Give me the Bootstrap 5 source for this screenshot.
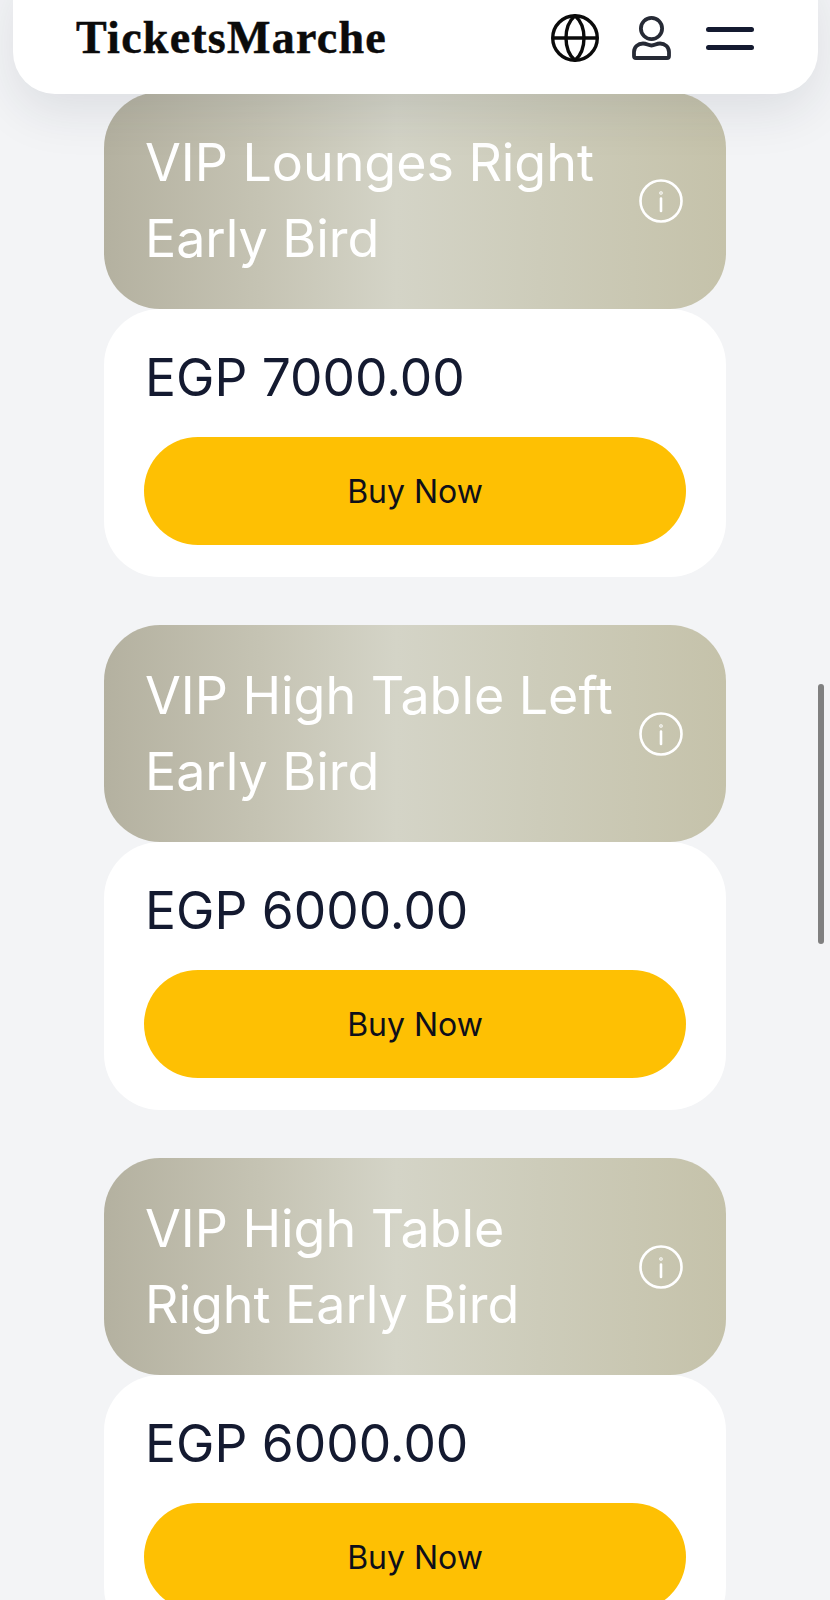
<!DOCTYPE html>
<html lang="en">
<head>
  <meta charset="UTF-8"/>
  <meta name="viewport" content="width=device-width, initial-scale=1.0"/>
  <title>TicketsMarche</title>
  <link href="https://cdn.jsdelivr.net/npm/bootstrap@5.3.0/dist/css/bootstrap.min.css" rel="stylesheet"/>
  <style>
    html, body { height: 1600px; overflow: hidden; }
    body { background: #f3f4f6; font-family: Inter, "Liberation Sans", sans-serif; position: relative; }
    .top-bar { position: absolute; top: -40px; left: 13px; width: 805px; height: 134px; background: #fff; border-radius: 42px; padding: 22px 64px 0 63px; box-shadow: 0 18px 50px rgba(30,35,60,.1); z-index: 5; }
    .brand-name { font-family: "Liberation Serif", serif; font-weight: 700; font-size: 46px; line-height: 1; color: #0b0b0b; letter-spacing: 1.25px; -webkit-text-stroke: .5px #0b0b0b; padding: 0; margin: 0; }
    .top-icons { gap: 33px; }
    .top-icons .menu-icon { margin-left: 2px; }
    .ticket-list { padding: 92px 104px 0; gap: 48px; }
    .ticket-head { height: 217px; border-radius: 56px; padding: 0 43px 0 41px; color: #fff; background: linear-gradient(90deg, #b4b1a0 0%, #c5c3b3 25%, #d4d4c7 47%, #cdccba 70%, #c5c2aa 100%); }
    .ticket-title { font-size: 52px; font-weight: 400; letter-spacing: -.05px; line-height: 76px; margin: 0; width: 480px; }
    .ticket-body { height: 268px; background: #fff; border-radius: 56px; padding: 30px 40px 0; }
    .ticket-price { font-size: 51.5px; font-weight: 400; line-height: 76px; color: #141a30; margin: 0 0 22px 1px; }
    .buy-btn { height: 108px; border-radius: 54px; background: #fec003; border: 0; color: #0e0f1a; font-size: 32px; width: 100%; padding-top: 8px; --bs-btn-hover-bg: #fec003; }
    .fake-scroll { position: absolute; left: 818px; top: 684px; width: 6px; height: 260px; background: #808080; border-radius: 3px; z-index: 6; }
  </style>
</head>
<body>
  <!-- Navbar -->
  <nav class="navbar top-bar d-flex justify-content-between align-items-center flex-nowrap">
    <a class="navbar-brand brand-name" href="#">TicketsMarche</a>
    <div class="d-flex align-items-center top-icons">
      <svg width="48" height="48" viewBox="0 0 48 48" fill="none" stroke="#0b0b0b" stroke-width="3.4">
        <circle cx="24" cy="24" r="22.3"/>
        <path d="M1.7 24H46.3"/>
        <path d="M24 1.7C12 12 12 36 24 46.3C36 36 36 12 24 1.7Z"/>
      </svg>
      <svg width="39" height="44" viewBox="0 0 39 44" fill="none" stroke="#262a35" stroke-width="3.8">
        <circle cx="19.5" cy="12.5" r="10.6"/>
        <path d="M4 42H35C36.4 42 37 41 37 40V36C37 31 33 27.5 28 27.5C24 27.5 23 29.5 19.5 29.5C16 29.5 15 27.5 11 27.5C6 27.5 2 31 2 36V40C2 41 2.6 42 4 42Z" stroke-linejoin="round"/>
      </svg>
      <svg class="menu-icon" width="48" height="23" viewBox="0 0 48 23" fill="none" stroke="#141a30" stroke-width="5" stroke-linecap="round">
        <path d="M2.5 2.5H45.5"/>
        <path d="M2.5 20.5H45.5"/>
      </svg>
    </div>
  </nav>

  <div class="d-flex flex-column ticket-list">
    <div>
      <div class="d-flex justify-content-between align-items-center ticket-head">
        <p class="ticket-title">VIP Lounges Right Early Bird</p>
        <svg width="44" height="44" viewBox="0 0 44 44" fill="none" stroke="#fff" stroke-width="2.6" stroke-linecap="round"><circle cx="22" cy="22" r="20.5"/><path d="M22 19.5V32"/><circle cx="22" cy="14" r=".5"/></svg>
      </div>
      <div class="ticket-body">
        <p class="ticket-price">EGP 7000.00</p>
        <button class="btn buy-btn" type="button">Buy Now</button>
      </div>
    </div>
    <div>
      <div class="d-flex justify-content-between align-items-center ticket-head">
        <p class="ticket-title">VIP High Table Left Early Bird</p>
        <svg width="44" height="44" viewBox="0 0 44 44" fill="none" stroke="#fff" stroke-width="2.6" stroke-linecap="round"><circle cx="22" cy="22" r="20.5"/><path d="M22 19.5V32"/><circle cx="22" cy="14" r=".5"/></svg>
      </div>
      <div class="ticket-body">
        <p class="ticket-price">EGP 6000.00</p>
        <button class="btn buy-btn" type="button">Buy Now</button>
      </div>
    </div>
    <div>
      <div class="d-flex justify-content-between align-items-center ticket-head">
        <p class="ticket-title">VIP High Table Right Early Bird</p>
        <svg width="44" height="44" viewBox="0 0 44 44" fill="none" stroke="#fff" stroke-width="2.6" stroke-linecap="round"><circle cx="22" cy="22" r="20.5"/><path d="M22 19.5V32"/><circle cx="22" cy="14" r=".5"/></svg>
      </div>
      <div class="ticket-body">
        <p class="ticket-price">EGP 6000.00</p>
        <button class="btn buy-btn" type="button">Buy Now</button>
      </div>
    </div>
  </div>

  <div class="fake-scroll"></div>
  <script src="https://cdn.jsdelivr.net/npm/bootstrap@5.3.0/dist/js/bootstrap.bundle.min.js"></script>
</body>
</html>
